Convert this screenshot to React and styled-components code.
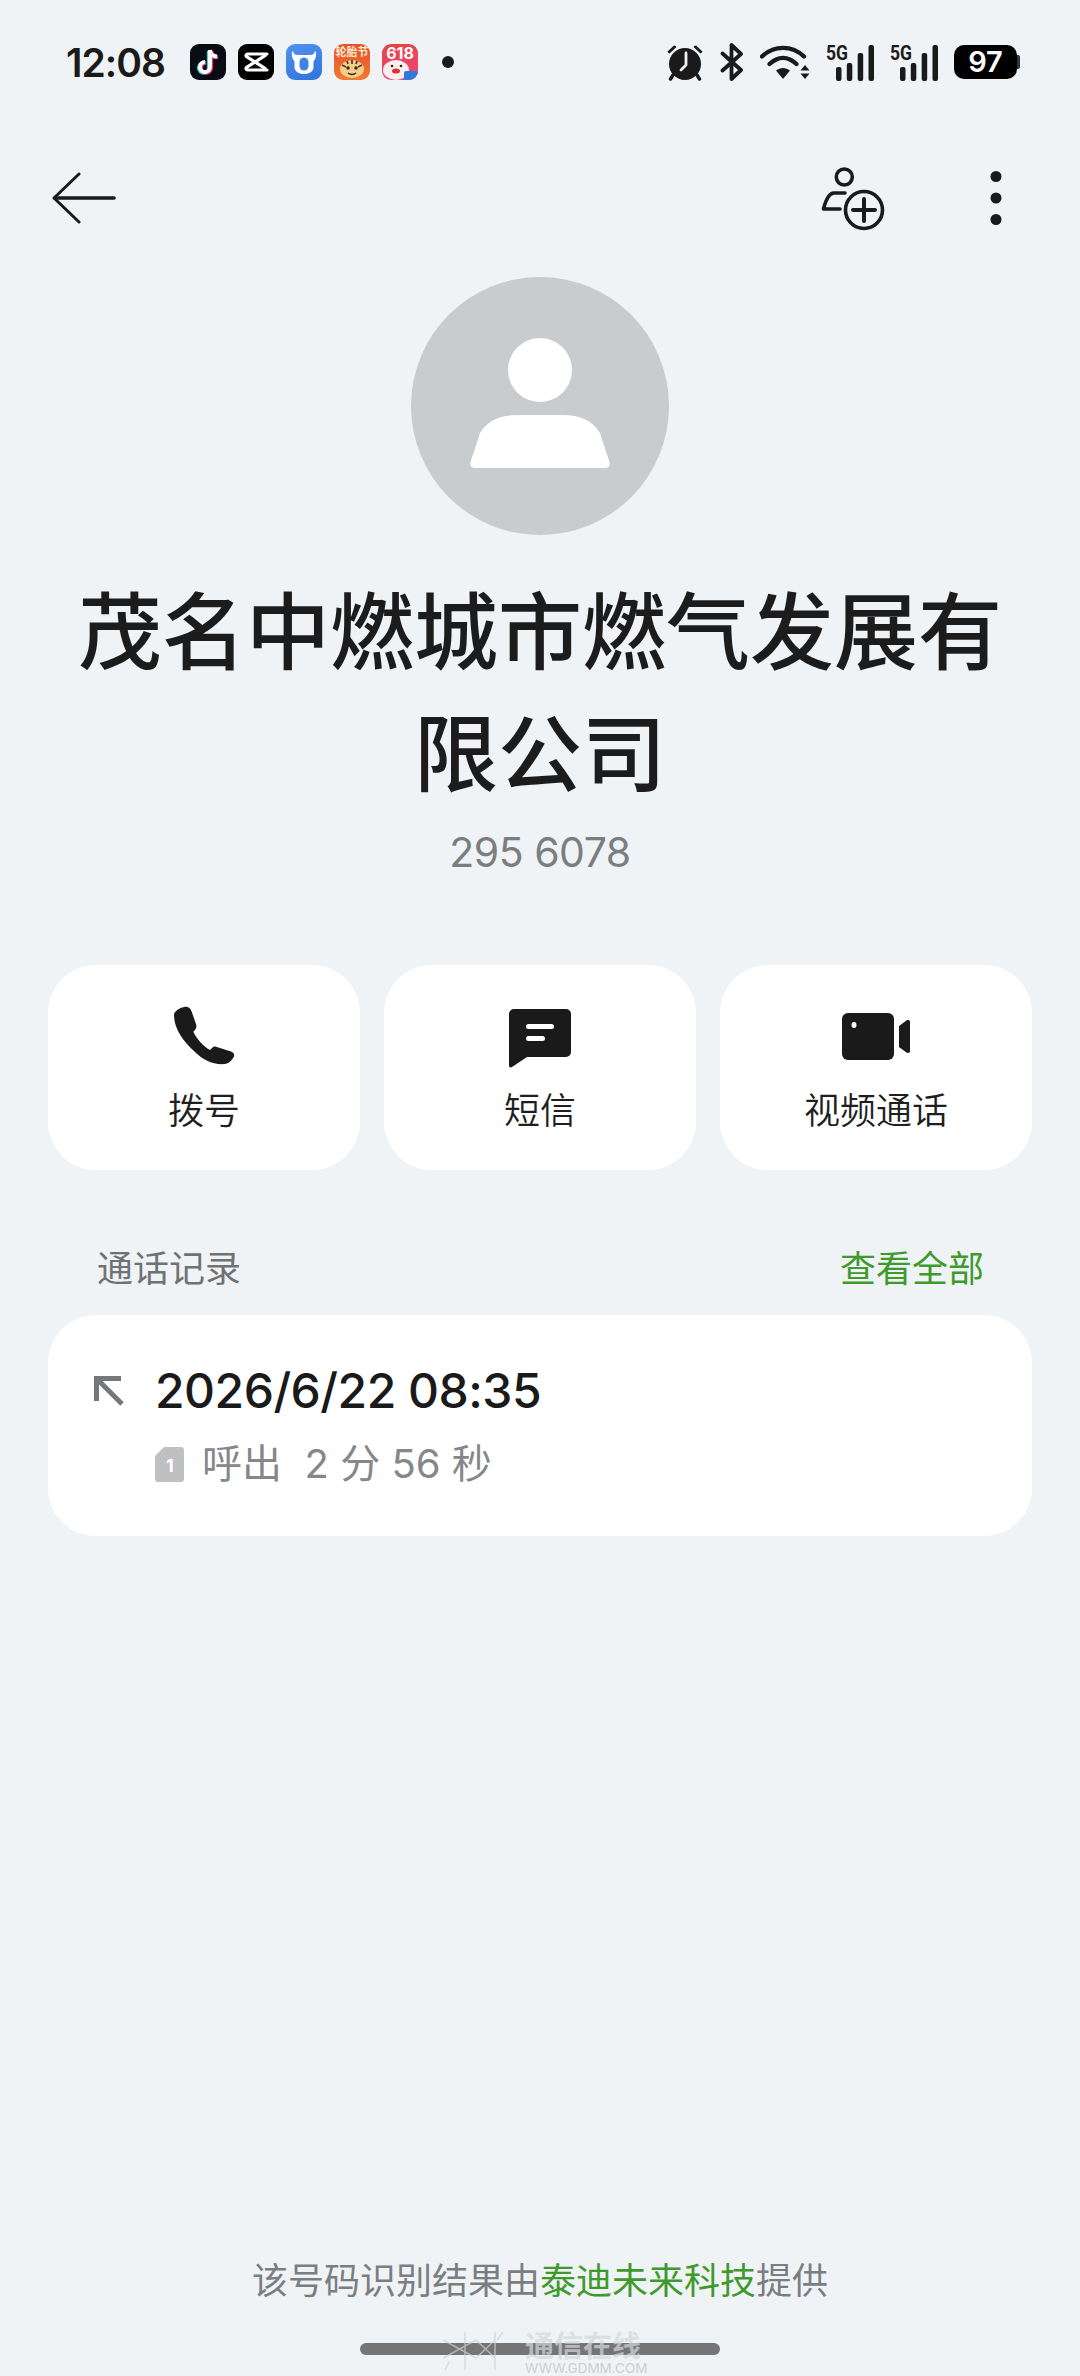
import React from 'react';
import styled, { createGlobalStyle } from 'styled-components';

const GlobalStyle = createGlobalStyle`
  html, body {
    margin: 0;
    padding: 0;
    background: #f0f3f6;
  }
  * { box-sizing: border-box; }
`;

const Page = styled.div`
  position: relative;
  width: 1080px;
  height: 2376px;
  overflow: hidden;
  display: flex;
  flex-direction: column;
  background: #f0f3f6;
  color: #1a1a1a;
  font-family: Inter, "Noto Sans CJK SC", sans-serif;
`;

const StatusBar = styled.div`
  height: 124px;
  flex: none;
  display: flex;
  align-items: center;
  padding: 0 60px 0 66px;
`;

const Time = styled.div`
  width: 124px;
  font-size: 39px;
  font-weight: 600;
  letter-spacing: -1px;
`;

const AppIcons = styled.div`
  display: flex;
  align-items: center;
  gap: 12px;
`;

const AppIcon = styled.div`
  width: 36px;
  height: 36px;
  border-radius: 9px;
  overflow: hidden;
  flex: none;
  background: ${(p) => p.$bg || '#000'};
`;

const NotifyDot = styled.div`
  width: 12px;
  height: 12px;
  margin-left: 12px;
  border-radius: 50%;
  background: #1a1a1a;
`;

const StatusIcons = styled.div`
  margin-left: auto;
  display: flex;
  align-items: center;
  gap: 16px;
`;

const Battery = styled.div`
  position: relative;
  width: 63px;
  height: 34px;
  border-radius: 10px;
  background: #000;
  color: #fff;
  font-size: 29px;
  font-weight: 600;
  line-height: 34px;
  text-align: center;
  margin-right: 3px;
  &::after {
    content: '';
    position: absolute;
    right: -3px;
    top: 10px;
    width: 3px;
    height: 14px;
    border-radius: 0 2px 2px 0;
    background: #333;
  }
`;

const Nav = styled.div`
  height: 100px;
  margin-top: 24px;
  flex: none;
  display: flex;
  align-items: center;
  padding: 0 78px 0 52px;
`;

const NavRight = styled.div`
  margin-left: auto;
  display: flex;
  align-items: center;
  gap: 104px;
`;

const Avatar = styled.div`
  width: 258px;
  height: 258px;
  flex: none;
  margin: 29px auto 0;
  border-radius: 50%;
  background: #c9cccf;
  display: flex;
  align-items: center;
  justify-content: center;
  padding-bottom: 6px;
`;

const Title = styled.h1`
  margin: 37px 60px 0;
  font-size: 84px;
  line-height: 122px;
  font-weight: 500;
  text-align: center;
  color: #1c1c1c;
`;

const Number = styled.div`
  margin-top: 8px;
  font-size: 41px;
  line-height: 56px;
  text-align: center;
  color: #7b7e81;
  letter-spacing: -0.5px;
`;

const Actions = styled.div`
  margin: 85px 48px 0;
  display: grid;
  grid-template-columns: repeat(3, 1fr);
  gap: 24px;
`;

const ActionCard = styled.div`
  height: 205px;
  border-radius: 48px;
  background: #fff;
  display: flex;
  flex-direction: column;
  align-items: center;
  padding-top: 38px;
`;

const ActionIcon = styled.div`
  height: 66px;
  display: flex;
  align-items: center;
  justify-content: center;
  padding-top: ${(p) => p.$shift || 0}px;
`;

const ActionLabel = styled.div`
  margin-top: 17px;
  font-size: 36px;
  line-height: 50px;
  font-weight: 350;
  color: #1f1f1f;
`;

const SectionHead = styled.div`
  margin: 66px 48px 19px;
  height: 60px;
  padding: 0 48px 0 49px;
  display: flex;
  align-items: center;
  justify-content: space-between;
  font-size: 36px;
`;

const SectionTitle = styled.div`
  color: #6f7275;
`;

const SeeAll = styled.div`
  color: #3f9a2c;
`;

const RecordCard = styled.div`
  margin: 0 48px;
  height: 221px;
  border-radius: 48px;
  background: #fff;
  display: grid;
  grid-template-columns: 46px 1fr;
  column-gap: 15px;
  padding: 46px 46px 0 46px;
  align-content: start;
`;

const ArrowCell = styled.div`
  padding-top: 15px;
`;

const RecordDate = styled.div`
  font-size: 48px;
  line-height: 60px;
  font-weight: 500;
  color: #1a1a1a;
  letter-spacing: -0.5px;
`;

const RecordMeta = styled.div`
  grid-column: 2;
  margin-top: 13px;
  display: flex;
  align-items: center;
  gap: 18px;
  font-size: 40px;
  line-height: 60px;
  color: #85878a;
`;

const Footer = styled.div`
  margin-top: auto;
  margin-bottom: 70px;
  text-align: center;
  font-size: 36px;
  line-height: 50px;
  color: #7b7e81;
`;

const Green = styled.span`
  color: #3f9a2c;
`;

const HomeBar = styled.div`
  position: absolute;
  left: 360px;
  top: 2343px;
  width: 360px;
  height: 12px;
  border-radius: 6px;
  background: #757575;
`;

const Watermark = styled.div`
  position: absolute;
  left: 443px;
  top: 2332px;
  display: flex;
  gap: 15px;
  opacity: 0.7;
`;

const WatermarkText = styled.div`
  display: flex;
  flex-direction: column;
  align-items: flex-start;
  color: #d4d6d8;
`;

const WatermarkName = styled.div`
  font-size: 29px;
  line-height: 29px;
  font-weight: 700;
`;

const WatermarkUrl = styled.div`
  font-size: 13.5px;
  line-height: 14px;
  color: #bfc1c3;
`;

const TikTokIcon = () => (
  <AppIcon $bg="#0a0c14">
    <svg width="36" height="36" viewBox="0 0 36 36" fill="none" strokeWidth="3.800">
      <g stroke="#25d9e0" transform="translate(-1.200 .8)">
        <path d="M20 6v17a5 5 0 1 1-5-5" />
        <path d="M20 6c.3 3.800 3 6.300 7 6.500" />
      </g>
      <g stroke="#f1325a" transform="translate(1.200 .8)">
        <path d="M20 6v17a5 5 0 1 1-5-5" />
        <path d="M20 6c.3 3.800 3 6.300 7 6.500" />
      </g>
      <g stroke="#fff">
        <path d="M20 6v17a5 5 0 1 1-5-5" />
        <path d="M20 6c.3 3.800 3 6.300 7 6.500" />
      </g>
    </svg>
  </AppIcon>
);

const CapCutIcon = () => (
  <AppIcon $bg="#000">
    <svg width="36" height="36" viewBox="0 0 36 36" fill="none" stroke="#fff" strokeWidth="3.200" strokeLinecap="round" strokeLinejoin="round">
      <path d="M29 10H9.500a1.500 1.500 0 0 0-1 2.600L27 24.400" />
      <path d="M29 26H9.500a1.500 1.500 0 0 1-1-2.600L27 11.600" />
    </svg>
  </AppIcon>
);

const BullIcon = () => (
  <AppIcon $bg="linear-gradient(160deg,#4f93ee,#2f72dc)">
    <svg width="36" height="36" viewBox="0 0 36 36">
      <path d="M7 7c.6 3 2.500 4 5 4h12c2.500 0 4.400-1 5-4l1 1c.5 5-1 8-2.500 9v6c0 4.500-4.500 7-9.500 7s-9.500-2.500-9.500-7v-6C7 16 5.500 13 6 8z" fill="#fff" />
      <rect x="13.500" y="13.500" width="9" height="13" rx="4.500" fill="#3f82e6" />
    </svg>
  </AppIcon>
);

const TireIcon = () => (
  <AppIcon $bg="linear-gradient(180deg,#e64e2a,#ef7a33)">
    <svg width="36" height="36" viewBox="0 0 36 36">
      <text x="18" y="12" textAnchor="middle" fontSize="11" fontWeight="700" fill="#ffeccc" fontFamily="Noto Sans CJK SC, sans-serif">轮胎节</text>
      <ellipse cx="18" cy="25" rx="12" ry="9" fill="#f2cc8a" />
      <path d="M8 21l4 2M28 21l-4 2M18 16v4M13 17l1 3M23 17l-1 3" stroke="#5a3b22" strokeWidth="1.800" />
      <circle cx="14" cy="24" r="1.700" fill="#33231a" />
      <circle cx="22" cy="24" r="1.700" fill="#33231a" />
      <path d="M14 29q4 3 8 0" stroke="#33231a" strokeWidth="1.500" fill="none" />
    </svg>
  </AppIcon>
);

const SaleIcon = () => (
  <AppIcon $bg="linear-gradient(160deg,#e8413f,#ea4a82)">
    <svg width="36" height="36" viewBox="0 0 36 36">
      <text x="18" y="15" textAnchor="middle" fontSize="16" fontWeight="700" fill="#fff" fontFamily="Inter, sans-serif">618</text>
      <ellipse cx="14" cy="26" rx="13" ry="10" fill="#fbeef0" />
      <circle cx="10" cy="22" r="1.300" fill="#33231a" />
      <circle cx="19" cy="22" r="1.300" fill="#33231a" />
      <ellipse cx="14" cy="27" rx="4" ry="2.500" fill="#d8352f" />
      <rect x="22" y="27" width="14" height="9" rx="2" fill="#2f7bdc" />
    </svg>
  </AppIcon>
);

const AlarmIcon = () => (
  <svg width="38" height="38" viewBox="0 0 38 38" fill="none">
    <path d="M1.500 8.500 8 2.500q2 .2 2.500 1.500L3.500 10.500Q2 10 1.500 8.500zM36.500 8.500 30 2.500q-2 .2-2.500 1.500l7 6.500q1.500-.5 2-2z" fill="#1a1a1a" />
    <circle cx="19" cy="21" r="16" fill="#1a1a1a" />
    <path d="M7 32l-2.500 4M31 32l2.500 4" stroke="#1a1a1a" strokeWidth="3.400" strokeLinecap="round" />
    <path d="M20 10v12l-5 5" stroke="#f0f3f6" strokeWidth="2.800" strokeLinecap="round" strokeLinejoin="round" />
  </svg>
);

const BluetoothIcon = () => (
  <svg width="24" height="38" viewBox="0 0 24 38" fill="none" stroke="#1a1a1a" strokeWidth="3.800" strokeLinecap="round" strokeLinejoin="round">
    <path d="M2.500 10.500 21 27 11.500 36V2L21 11 2.500 27.500" />
  </svg>
);

const WifiIcon = () => (
  <svg width="50" height="38" viewBox="0 0 50 38" fill="none">
    <path d="M2 13.500C14 2 32 2 44 13.500" stroke="#1a1a1a" strokeWidth="4.400" strokeLinecap="round" />
    <path d="M9.500 21C18 13 28 13 36.500 21" stroke="#1a1a1a" strokeWidth="4.400" strokeLinecap="round" />
    <path d="M16 27.500c4.500-3.500 9.500-3.500 14 0L23 36z" fill="#1a1a1a" />
    <path d="M40.500 27.500 45 22l4.500 5.500zM40.500 30.500h9L45 36z" fill="#1a1a1a" />
  </svg>
);

const Signal = () => (
  <svg width="48" height="38" viewBox="0 0 48 38" overflow="visible">
    <text x="0" y="17" fontSize="21" fontWeight="700" textLength="22" lengthAdjust="spacingAndGlyphs" fill="#1a1a1a" fontFamily="Roboto, sans-serif">5G</text>
    <rect x="10" y="24" width="5.500" height="14" rx="2" fill="#1a1a1a" />
    <rect x="20.800" y="20" width="5.500" height="18" rx="2" fill="#1a1a1a" />
    <rect x="31.700" y="10" width="5.500" height="28" rx="2" fill="#1a1a1a" />
    <rect x="42.500" y="2" width="5.500" height="36" rx="2" fill="#1a1a1a" />
  </svg>
);

const BackIcon = () => (
  <svg width="64" height="52" viewBox="0 0 64 52" fill="none" stroke="#1a1a1a" strokeLinecap="round" strokeLinejoin="round">
    <path d="M27 2 2 26l25 24" strokeWidth="3" />
    <path d="M3 26h59" strokeWidth="3.600" />
  </svg>
);

const AddContactIcon = () => (
  <svg width="66" height="67" viewBox="0 0 66 67" fill="none" stroke="#1a1a1a" strokeWidth="3.600" strokeLinecap="round" strokeLinejoin="round">
    <circle cx="24.300" cy="12" r="8" />
    <path d="M25 28H14C9 28 5.500 36 3.500 44H20" />
    <circle cx="44" cy="45" r="18.500" />
    <path d="M33 45h22M44 34v22" strokeWidth="4" />
  </svg>
);

const MoreIcon = () => (
  <svg width="12" height="56" viewBox="0 0 12 56" fill="#1a1a1a">
    <circle cx="6" cy="6.500" r="5.500" />
    <circle cx="6" cy="28" r="5.500" />
    <circle cx="6" cy="49.500" r="5.500" />
  </svg>
);

const PersonIcon = () => (
  <svg width="140" height="130" viewBox="0 0 140 130" fill="#fff">
    <circle cx="70" cy="32" r="32" />
    <path d="M48 77H92C110 77 122 82 130 95L139.500 124C140.500 127 139 130 136 130H4C1 130-.5 127 .5 124L10 95C18 82 30 77 48 77Z" />
  </svg>
);

const PhoneIcon = () => (
  <svg width="62" height="62" viewBox="0 0 62 62" fill="#1a1a1a">
    <path d="M1 10C1 6 7 2.500 12 1.700 15 1.300 17.500 3 18.700 6.700L23 19C24 22 23 24 20.300 26.700 24 34 30 41 37 45 39 43.500 40 41 43 41.700L58 46.500C61 47.500 62 50 60.500 52.500 58 56 55.500 58.500 52 59 40 60 30 55 22 47 10 36 1 24 1 10Z" />
  </svg>
);

const MessageIcon = () => (
  <svg width="62" height="59" viewBox="0 0 62 59" fill="#1a1a1a">
    <path d="M5 0h52a5 5 0 0 1 5 5v38a5 5 0 0 1-5 5H18L3 58c-1.500 1-3 .3-3-1.500V5a5 5 0 0 1 5-5z" />
    <rect x="17" y="15" width="28" height="5" rx="2.500" fill="#fff" />
    <rect x="17" y="27" width="19" height="5" rx="2.500" fill="#fff" />
  </svg>
);

const VideoIcon = () => (
  <svg width="68" height="47" viewBox="0 0 68 47" fill="#1a1a1a">
    <rect x="0" y="0" width="52" height="47" rx="6" />
    <ellipse cx="12" cy="12" rx="2.500" ry="3" fill="#fff" />
    <path d="M57 13l7.500-5.500C66 6.500 68 7 68 9v29c0 2-2 2.500-3.500 1.500L57 34z" />
  </svg>
);

const OutgoingArrow = () => (
  <svg width="30" height="30" viewBox="0 0 30 30" fill="none" stroke="#757779" strokeWidth="5">
    <path d="M2.500 25V2.500H27" />
    <path d="M3 3 28 28" />
  </svg>
);

const SimIcon = () => (
  <svg width="29" height="35" viewBox="0 0 29 35">
    <path d="M9 0h17a3 3 0 0 1 3 3v29a3 3 0 0 1-3 3H3a3 3 0 0 1-3-3V9z" fill="#bfc0c2" />
    <text x="15" y="25" textAnchor="middle" fontSize="18" fontWeight="700" fill="#fff" fontFamily="Inter, sans-serif">1</text>
  </svg>
);

const WatermarkLogo = () => (
  <svg width="67" height="40" viewBox="0 0 67 40" fill="none" stroke="#cfd1d3" strokeWidth="1.500">
    <path d="M0 8 33 26 52 8M0 26 33 8 52 26M22 0v38M52 0v38M60 0l-6 8M6 30l-4 8" />
  </svg>
);

export default function App() {
  return (
    <Page>
      <GlobalStyle />
      <StatusBar>
        <Time>12:08</Time>
        <AppIcons>
          <TikTokIcon />
          <CapCutIcon />
          <BullIcon />
          <TireIcon />
          <SaleIcon />
          <NotifyDot />
        </AppIcons>
        <StatusIcons>
          <AlarmIcon />
          <BluetoothIcon />
          <WifiIcon />
          <Signal />
          <Signal />
          <Battery>97</Battery>
        </StatusIcons>
      </StatusBar>

      <Nav>
        <BackIcon />
        <NavRight>
          <AddContactIcon />
          <MoreIcon />
        </NavRight>
      </Nav>

      <Avatar>
        <PersonIcon />
      </Avatar>
      <Title>茂名中燃城市燃气发展有限公司</Title>
      <Number>295 6078</Number>

      <Actions>
        <ActionCard>
          <ActionIcon><PhoneIcon /></ActionIcon>
          <ActionLabel>拨号</ActionLabel>
        </ActionCard>
        <ActionCard>
          <ActionIcon $shift={5}><MessageIcon /></ActionIcon>
          <ActionLabel>短信</ActionLabel>
        </ActionCard>
        <ActionCard>
          <ActionIcon><VideoIcon /></ActionIcon>
          <ActionLabel>视频通话</ActionLabel>
        </ActionCard>
      </Actions>

      <SectionHead>
        <SectionTitle>通话记录</SectionTitle>
        <SeeAll>查看全部</SeeAll>
      </SectionHead>
      <RecordCard>
        <ArrowCell><OutgoingArrow /></ArrowCell>
        <RecordDate>2026/6/22 08:35</RecordDate>
        <RecordMeta>
          <SimIcon />
          <span>呼出&nbsp; 2 分 56 秒</span>
        </RecordMeta>
      </RecordCard>

      <Footer>该号码识别结果由<Green>泰迪未来科技</Green>提供</Footer>
      <HomeBar />
      <Watermark>
        <WatermarkLogo />
        <WatermarkText>
          <WatermarkName>通信在线</WatermarkName>
          <WatermarkUrl>WWW.GDMM.COM</WatermarkUrl>
        </WatermarkText>
      </Watermark>
    </Page>
  );
}
